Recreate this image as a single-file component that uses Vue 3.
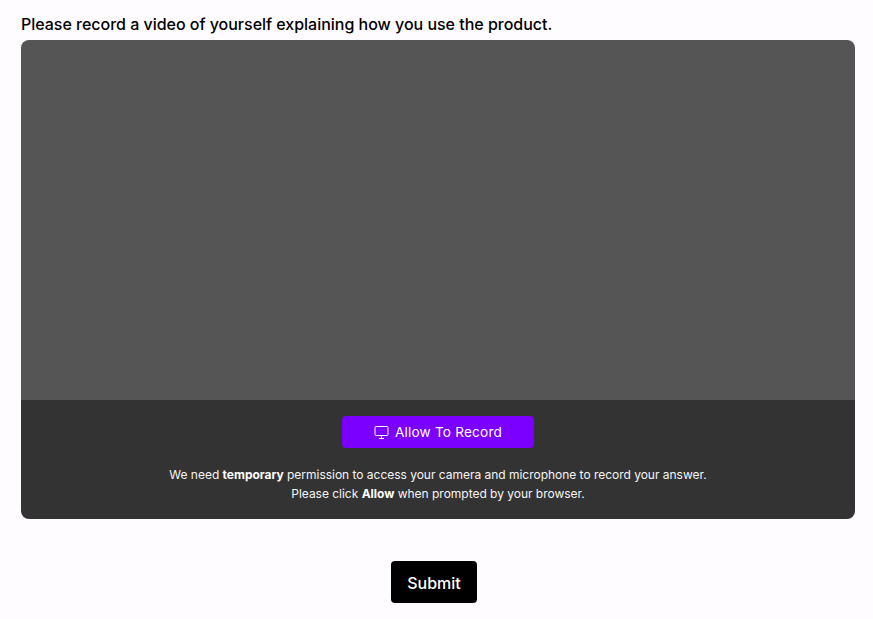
<template>
  <div class="form_box">
    <div class="question">Please record a video of yourself explaining how you use the product.</div>
    <div class="recorder">
      <div class="preview"></div>
      <!-- permission panel -->
      <div class="controls">
        <button class="btn_allow" type="button">
          <svg class="icon" viewBox="0 0 15 15" fill="none" stroke="currentColor" stroke-linejoin="round">
            <rect x="1" y="1.5" width="13" height="9" rx="1" />
            <path d="M7.5 10.5v3M5 13.5h5" />
          </svg>
          <span>Allow To Record</span>
        </button>
        <div class="tips">
          We need <b>temporary</b> permission to access your camera and microphone to record your answer.<br>
          Please click <b>Allow</b> when prompted by your browser.
        </div>
      </div>
    </div>
    <button class="btn_submit" type="button">Submit</button>
  </div>
</template>

<script setup>
</script>

<style>
  body {
    margin: 0;
    background-color: #fffcff;
  }
</style>

<style scoped>
  .form_box {
    box-sizing: border-box;
    height: 619px;
    padding: 12px 18px 0 21px;
    font-family: Inter, sans-serif;
    display: flex;
    flex-direction: column;
  }
  .question {
    height: 28px;
    line-height: 24px;
    font-size: 16px;
    font-weight: 500;
    letter-spacing: -0.02px;
    color: #000;
  }
  .recorder {
    height: 479px;
    border-radius: 8px;
    overflow: hidden;
  }
  .preview {
    height: 360px;
    background-color: #555;
  }
  .controls {
    box-sizing: border-box;
    height: 119px;
    padding-top: 16px;
    background-color: #333;
    display: flex;
    flex-direction: column;
    align-items: center;
  }
  button {
    border: none;
    padding: 0;
    font-family: inherit;
    color: #fff;
  }
  .btn_allow {
    width: 192px;
    height: 32px;
    border-radius: 4px;
    background-color: #7b00ff;
    font-size: 13.6px;
    letter-spacing: 0.2px;
    display: flex;
    align-items: center;
    justify-content: center;
    gap: 6px;
  }
  .icon {
    width: 15px;
    height: 15px;
    margin-top: 1px;
  }
  .tips {
    margin-top: 17px;
    line-height: 19px;
    font-size: 12px;
    letter-spacing: -0.02px;
    text-align: center;
    color: #f5f5f5;
  }
  .tips b {
    font-weight: 700;
    color: #fff;
  }
  .btn_submit {
    width: 86px;
    height: 42px;
    margin: 42px 0 0 370px;
    padding-top: 2px;
    border-radius: 4px;
    background-color: #000;
    font-size: 16px;
    font-weight: 500;
  }
</style>
